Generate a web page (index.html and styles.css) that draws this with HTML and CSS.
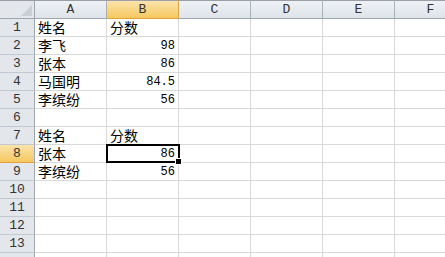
FILE: index.html
```html
<!DOCTYPE html>
<html lang="zh">
<head>
  <meta charset="UTF-8">
  <title>Sheet1</title>
  <link rel="stylesheet" href="styles.css">
</head>
<body>
  <div class="sheet">
    <!-- column headers -->
    <div class="corner"><span class="tri"></span></div>
    <div class="colhead">A</div>
    <div class="colhead sel">B</div>
    <div class="colhead">C</div>
    <div class="colhead">D</div>
    <div class="colhead">E</div>
    <div class="colhead">F</div>

    <div class="rowhead">1</div><div class="cell">姓名</div><div class="cell">分数</div><div class="cell"></div><div class="cell"></div><div class="cell"></div><div class="cell"></div>
    <div class="rowhead">2</div><div class="cell">李飞</div><div class="cell num">98</div><div class="cell"></div><div class="cell"></div><div class="cell"></div><div class="cell"></div>
    <div class="rowhead">3</div><div class="cell">张本</div><div class="cell num">86</div><div class="cell"></div><div class="cell"></div><div class="cell"></div><div class="cell"></div>
    <div class="rowhead">4</div><div class="cell">马国明</div><div class="cell num">84.5</div><div class="cell"></div><div class="cell"></div><div class="cell"></div><div class="cell"></div>
    <div class="rowhead">5</div><div class="cell">李缤纷</div><div class="cell num">56</div><div class="cell"></div><div class="cell"></div><div class="cell"></div><div class="cell"></div>
    <div class="rowhead">6</div><div class="cell"></div><div class="cell"></div><div class="cell"></div><div class="cell"></div><div class="cell"></div><div class="cell"></div>
    <div class="rowhead">7</div><div class="cell">姓名</div><div class="cell">分数</div><div class="cell"></div><div class="cell"></div><div class="cell"></div><div class="cell"></div>
    <div class="rowhead sel">8</div><div class="cell">张本</div><div class="cell num active">86<span class="handle"></span></div><div class="cell"></div><div class="cell"></div><div class="cell"></div><div class="cell"></div>
    <div class="rowhead">9</div><div class="cell">李缤纷</div><div class="cell num">56</div><div class="cell"></div><div class="cell"></div><div class="cell"></div><div class="cell"></div>
    <div class="rowhead">10</div><div class="cell"></div><div class="cell"></div><div class="cell"></div><div class="cell"></div><div class="cell"></div><div class="cell"></div>
    <div class="rowhead">11</div><div class="cell"></div><div class="cell"></div><div class="cell"></div><div class="cell"></div><div class="cell"></div><div class="cell"></div>
    <div class="rowhead">12</div><div class="cell"></div><div class="cell"></div><div class="cell"></div><div class="cell"></div><div class="cell"></div><div class="cell"></div>
    <div class="rowhead">13</div><div class="cell"></div><div class="cell"></div><div class="cell"></div><div class="cell"></div><div class="cell"></div><div class="cell"></div>
    <div class="rowhead"></div><div class="cell"></div><div class="cell"></div><div class="cell"></div><div class="cell"></div><div class="cell"></div><div class="cell"></div>
  </div>
</body>
</html>
```

FILE: styles.css
```css
body {
  margin: 0;
  padding: 0;
  background: white;
  overflow: hidden;
}

.sheet {
  display: grid;
  grid-template-columns: 35px repeat(6, 72px);
  grid-template-rows: 19px repeat(14, 18px);
  width: 467px;
  font-family: "Noto Sans CJK SC", sans-serif;
}

.sheet div {
  box-sizing: border-box;
}

.corner {
  position: relative;
  background: #e3e7ec;
  border-top: 1px solid #9a9fa6;
  border-right: 1px solid #9ea6b0;
  border-bottom: 1px solid #9ea6b0;
}

.corner .tri {
  position: absolute;
  right: 2px;
  bottom: 2px;
  width: 0;
  height: 0;
  border-left: 11px solid transparent;
  border-bottom: 11px solid #c9ced4;
}

.colhead {
  background: linear-gradient(#eef1f5, #dfe4ea);
  border-top: 1px solid #9a9fa6;
  border-right: 1px solid #a9b1bb;
  border-bottom: 1px solid #9ea6b0;
  text-align: center;
  font-family: "Liberation Mono", monospace;
  font-size: 13px;
  line-height: 17px;
  color: #333;
}

.colhead.sel {
  background: linear-gradient(#fbe3ab, #f6c960);
  border-right: 1px solid #e3a33a;
  border-bottom: 1px solid #e3a33a;
}

.rowhead {
  background: #e3e7ec;
  border-right: 1px solid #9ea6b0;
  border-bottom: 1px solid #c2c8d0;
  text-align: center;
  font-family: "Liberation Mono", monospace;
  font-size: 13px;
  line-height: 18px;
  color: #333;
}

.rowhead.sel {
  background: linear-gradient(#fbe3ab, #f6c960);
  border-bottom: 1px solid #e3a33a;
}

.cell {
  border-right: 1px solid #d9d9d9;
  border-bottom: 1px solid #d9d9d9;
  padding: 0 3px;
  font-size: 14px;
  line-height: 17px;
  color: #000;
  white-space: nowrap;
}

.cell.num {
  text-align: right;
  font-family: "Liberation Mono", monospace;
  font-size: 12px;
  line-height: 18px;
}

.cell.active {
  position: relative;
  border: 2px solid #000;
  margin: -1px 0 0 -1px;
  width: 74px;
  height: 19px;
  line-height: 16px;
}

.cell.active .handle {
  position: absolute;
  right: -4px;
  bottom: -4px;
  width: 5px;
  height: 5px;
  background: #000;
  border: 1px solid #fff;
}
```
